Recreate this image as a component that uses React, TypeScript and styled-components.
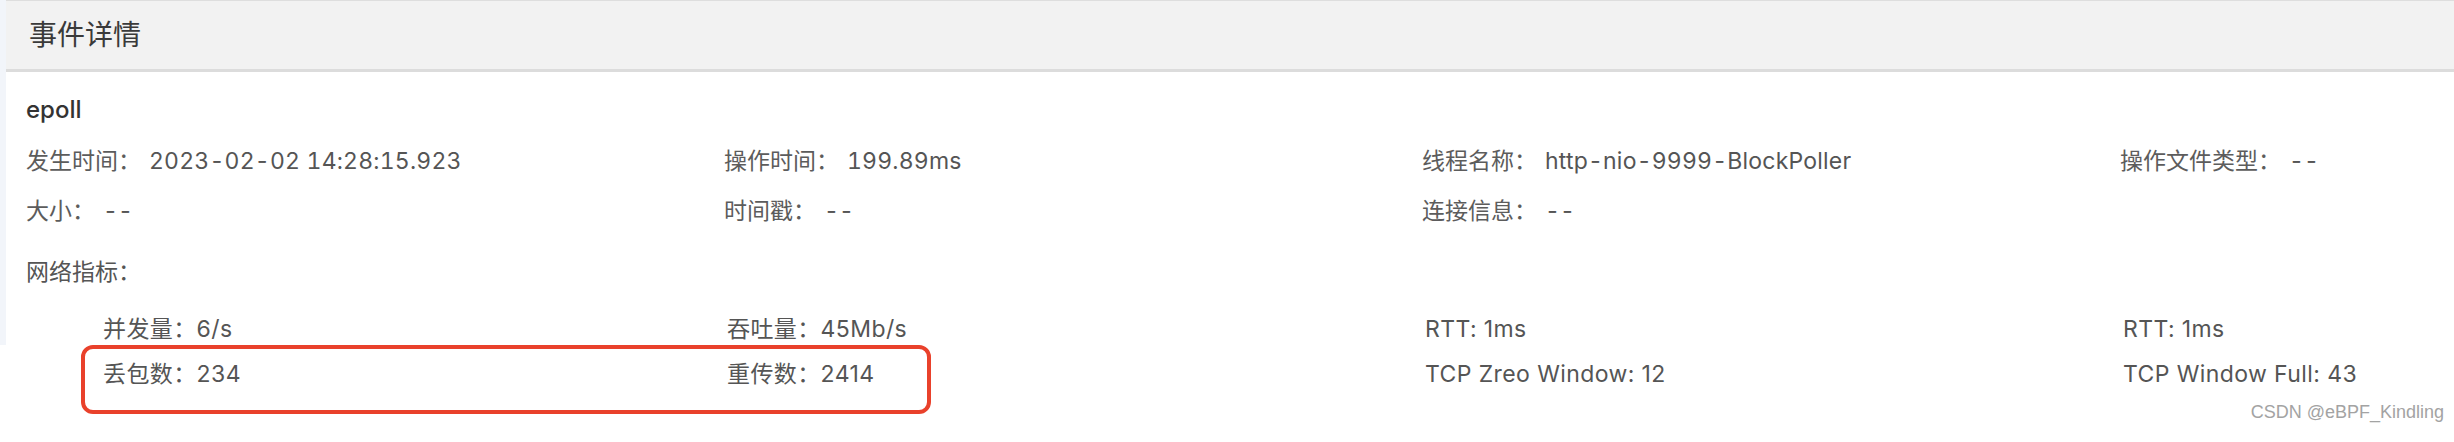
import React from 'react';
import styled, { createGlobalStyle } from 'styled-components';

const GlobalStyle = createGlobalStyle`
  * {
    margin: 0;
    padding: 0;
    box-sizing: border-box;
  }
  html, body {
    background: #fff;
    overflow: hidden;
  }
  body {
    width: 2454px;
    height: 442px;
    font-family: Inter, "Noto Sans CJK SC", sans-serif;
    color: #555;
  }
`;

const Page = styled.div`
  position: relative;
  display: flex;
  align-items: flex-start;
  width: 100%;
  height: 442px;
  overflow: hidden;
`;

const SideStrip = styled.div`
  flex: 0 0 6px;
  height: 345px;
  background: #f2f5fa;
`;

const Card = styled.section`
  flex: 1;
  min-width: 0;
`;

// Header =========================================================================================

const CardHeader = styled.header`
  height: 72px;
  padding-left: 23px;
  background: #f2f2f2;
  border-top: 1px solid #dedede;
  border-bottom: 3px solid #dcdcdc;
  font-size: 28px;
  line-height: 68px;
  color: #3a3a3a;
`;

// Body ===========================================================================================

const CardBody = styled.div`
  padding: 23px 0 0 20px;
`;

const EventName = styled.h3`
  font-size: 24px;
  font-weight: 500;
  line-height: 30px;
  color: #333;
  margin-bottom: 21px;
`;

const InfoGrid = styled.div`
  display: grid;
  grid-template-columns: repeat(4, 698px);
  row-gap: 20px;
`;

const Field = styled.div`
  display: flex;
  font-size: 23px;
  line-height: 30px;
  white-space: nowrap;
`;

const Label = styled.span`
  margin-right: 8px;
  color: #5c5c5c;
`;

const Value = styled.span`
  color: #555;
  font-variant-numeric: tabular-nums;
  letter-spacing: 0.2px;
`;

const SectionTitle = styled.div`
  margin-top: 31px;
  font-size: 23px;
  line-height: 30px;
  color: #555;
`;

const Metrics = styled.div`
  display: flex;
  flex-direction: column;
  gap: 15px;
  margin-top: 27px;
`;

const MetricRow = styled.div<{ $highlight?: boolean }>`
  position: relative;
  display: grid;
  grid-template-columns: repeat(4, 698px);

  ${(p) => p.$highlight && `
    &::after {
      content: '';
      position: absolute;
      left: 55px;
      width: 842px;
      top: -14px;
      bottom: -25px;
      border: 4px solid #e9412b;
      border-radius: 12px;
    }
  `}
`;

const Metric = styled.div<{ $first?: boolean }>`
  padding-left: ${(p) => (p.$first ? '77px' : '3px')};
  font-size: 23px;
  line-height: 30px;
  color: #555;
  white-space: nowrap;
  letter-spacing: 0.4px;
`;

const Watermark = styled.div`
  position: absolute;
  right: 10px;
  bottom: 19px;
  font-family: "Liberation Sans", sans-serif;
  font-size: 18px;
  line-height: 22px;
  color: #a3a3a3;
`;

// Data ===========================================================================================

const fields: [string, string][] = [
  ['发生时间：', '2023-02-02 14:28:15.923'],
  ['操作时间：', '199.89ms'],
  ['线程名称：', 'http-nio-9999-BlockPoller'],
  ['操作文件类型：', '--'],
  ['大小：', '--'],
  ['时间戳：', '--'],
  ['连接信息：', '--'],
];

const metricRows: string[][] = [
  ['并发量：6/s', '吞吐量：45Mb/s', 'RTT: 1ms', 'RTT: 1ms'],
  ['丢包数：234', '重传数：2414', 'TCP Zreo Window: 12', 'TCP Window Full: 43'],
];

const App: React.FC = () => (
  <>
    <GlobalStyle />
    <Page>
      <SideStrip />
      <Card>
        <CardHeader>事件详情</CardHeader>
        <CardBody>
          <EventName>epoll</EventName>
          <InfoGrid>
            {fields.map(([label, value]) => (
              <Field key={label}>
                <Label>{label}</Label>
                <Value>{value}</Value>
              </Field>
            ))}
          </InfoGrid>
          <SectionTitle>网络指标：</SectionTitle>
          <Metrics>
            {metricRows.map((row, rowIdx) => (
              <MetricRow key={`row${rowIdx}`} $highlight={rowIdx === 1}>
                {row.map((text, colIdx) => (
                  <Metric key={`m-${rowIdx}${colIdx}`} $first={colIdx === 0}>
                    {text}
                  </Metric>
                ))}
              </MetricRow>
            ))}
          </Metrics>
        </CardBody>
      </Card>
      <Watermark>CSDN @eBPF_Kindling</Watermark>
    </Page>
  </>
);

export default App;
